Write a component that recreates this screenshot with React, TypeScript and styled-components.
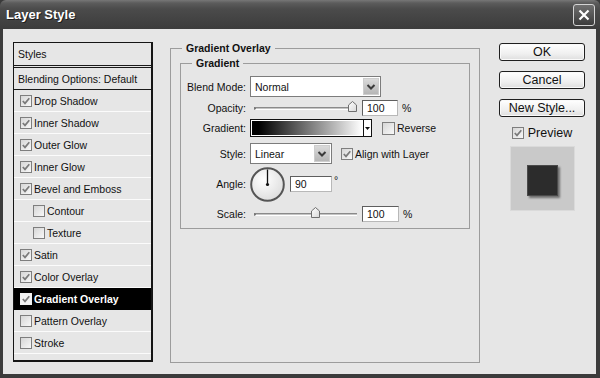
import React from 'react';
import styled, { createGlobalStyle, css } from 'styled-components';

const Global = createGlobalStyle`
  html, body { margin: 0; padding: 0; background: #3a3a3a; }
  body { width: 600px; height: 378px; overflow: hidden; font-family: "Liberation Sans", Arial, sans-serif; color: #111; }
  * { box-sizing: border-box; }
`;

const Window = styled.div`
  width: 600px;
  height: 378px;
  display: flex;
  flex-direction: column;
  background: #3b3b3b;
  border-radius: 6px 6px 0 0;
  overflow: hidden;
`;

const TitleBar = styled.div`
  height: 29px;
  flex: none;
  display: flex;
  align-items: center;
  justify-content: space-between;
  padding: 0 5px 0 6px;
  background: linear-gradient(#777 0px, #5c5c5c 3px, #4b4b4b 9px, #444 18px, #3c3c3c 29px);
`;

const Title = styled.div`
  color: #fff;
  font-weight: bold;
  font-size: 13px;
  text-shadow: 1px 1px 0 #1e1e1e;
`;

const CloseBtn = styled.div`
  width: 22px;
  height: 22px;
  border: 1px solid #d4d4d4;
  border-radius: 3px;
  background: linear-gradient(#707070, #3c3c3c);
  display: flex;
  align-items: center;
  justify-content: center;
`;

const Body = styled.div`
  flex: 1;
  margin: 0 4px 4px 3px;
  background: #e6e6e6;
  display: flex;
  align-items: flex-start;
  padding: 13px 0 0 10px;
`;

/* ---------- left list ---------- */
const List = styled.div`
  width: 140px;
  height: 320px;
  flex: none;
  border: 1px solid #151515;
  border-right-width: 2px;
  border-bottom-width: 2px;
  background: #e6e6e6;
  overflow: hidden;
  font-size: 10.5px;
`;

const HeaderRow = styled.div<{ $double?: boolean }>`
  height: ${p => (p.$double ? 25 : 22)}px;
  display: flex;
  align-items: center;
  padding-left: 4px;
  border-bottom: ${p => (p.$double ? '3px double #1a1a1a' : '1px solid #1a1a1a')};
`;

const Item = styled.div<{ $indent?: boolean; $selected?: boolean }>`
  height: 22px;
  display: flex;
  align-items: center;
  gap: 2px;
  padding-left: ${p => (p.$indent ? 19 : 6)}px;
  border-bottom: 1px solid #fbfbfb;
  ${p =>
    p.$selected &&
    css`
      background: #000;
      color: #fff;
      font-weight: bold;
      border-bottom-color: #000;
    `}
`;

const Box = styled.span<{ $size: number; $inverted?: boolean }>`
  width: ${p => p.$size}px;
  height: ${p => p.$size}px;
  flex: none;
  display: inline-flex;
  align-items: center;
  justify-content: center;
  border: 1px solid ${p => (p.$inverted ? '#f0f0f0' : '#7e7e7e')};
  background: ${p => (p.$inverted ? '#f2f2f2' : 'linear-gradient(135deg, #d6d6d6, #f8f8f8)')};
`;

const CheckBox: React.FC<{ checked?: boolean; inverted?: boolean; size?: number }> = ({
  checked,
  inverted,
  size = 12,
}) => (
  <Box $size={size} $inverted={inverted}>
    {checked && (
      <svg width={size - 2} height={size - 2} viewBox="0 0 10 10">
        <polyline points="1.8,5 4,7.4 8.3,2.3" fill="none" stroke="#7a7a7a" strokeWidth="1.7" />
      </svg>
    )}
  </Box>
);

/* ---------- middle groups ---------- */
const Group = styled.fieldset<{ $w: number; $h?: number; $pad: string; $mt?: number; $ml?: number }>`
  margin: ${p => p.$mt ?? 0}px 0 0 ${p => p.$ml ?? 0}px;
  min-inline-size: 0;
  width: ${p => p.$w}px;
  ${p => (p.$h ? `height: ${p.$h}px;` : '')}
  border: 1px solid #9c9c9c;
  padding: ${p => p.$pad};
  flex: none;
`;

const Legend = styled.legend<{ $indent: number }>`
  font-weight: bold;
  font-size: 10.5px;
  line-height: 12px;
  padding: 0 4px;
  margin-left: ${p => p.$indent}px;
`;

const Row = styled.div<{ $h: number; $mt: number }>`
  display: grid;
  grid-template-columns: 65px auto;
  column-gap: 4px;
  align-items: center;
  height: ${p => p.$h}px;
  margin-top: ${p => p.$mt}px;
  font-size: 10.5px;
`;

const Label = styled.span`
  text-align: right;
`;

const Controls = styled.div<{ $gap: number }>`
  display: flex;
  align-items: center;
  gap: ${p => p.$gap}px;
`;

const Select = styled.div<{ $w: number }>`
  width: ${p => p.$w}px;
  height: 21px;
  border: 1px solid #7c7c7c;
  background: #fff;
  display: flex;
  align-items: center;
  justify-content: space-between;
  padding: 1px 1px 1px 4px;
`;

const SelectArrow = styled.span`
  width: 16px;
  align-self: stretch;
  background: linear-gradient(#dadada, #b6b6b6);
  border: 1px solid #cdcdcd;
  display: flex;
  align-items: center;
  justify-content: center;
`;

const Chevron = () => (
  <svg width="10" height="8" viewBox="0 0 10 8">
    <polyline points="1.5,2 5,5.5 8.5,2" fill="none" stroke="#3a3a3a" strokeWidth="2" />
  </svg>
);

const NumInput = styled.div<{ $w: number }>`
  width: ${p => p.$w}px;
  height: 16px;
  border: 1px solid #5e5e5e;
  border-right-color: #b8b8b8;
  border-bottom-color: #b8b8b8;
  background: #fff;
  padding-left: 4px;
  display: flex;
  align-items: center;
`;

const Unit = styled.span<{ $top?: boolean }>`
  ${p => (p.$top ? 'align-self: flex-start; margin: 7px 0 0 -3px;' : '')}
`;

const SliderWrap = styled.div<{ $w: number }>`
  position: relative;
  width: ${p => p.$w}px;
  height: 12px;
  margin: -3px 1px 0 4px;
`;

const Track = styled.div`
  position: absolute;
  left: 0;
  right: 0;
  top: 6px;
  height: 3px;
  border-top: 1px solid #8a8a8a;
  border-bottom: 1px solid #fff;
  background: #c4c4c4;
  border-left: 2px solid #777;
`;

const Thumb = styled.svg`
  position: absolute;
  top: 0;
`;

const Slider: React.FC<{ pos: number; width?: number }> = ({ pos, width = 103 }) => (
  <SliderWrap $w={width}>
    <Track />
    <Thumb width="9" height="11" viewBox="0 0 9 11" style={{ left: Math.round((width - 9) * pos) }}>
      <defs>
        <linearGradient id="thumbg" x1="0" y1="0" x2="1" y2="1">
          <stop offset="0%" stopColor="#ffffff" />
          <stop offset="100%" stopColor="#d8d8d8" />
        </linearGradient>
      </defs>
      <path d="M0.5,10.5 L0.5,4 L4.5,0.5 L8.5,4 L8.5,10.5 Z" fill="url(#thumbg)" stroke="#6f6f6f" strokeWidth="1" />
    </Thumb>
  </SliderWrap>
);

const GradientBox = styled.div`
  width: 122px;
  height: 18px;
  border: 1px solid #111;
  display: flex;
  background: #fff;
`;

const GradientFill = styled.div`
  flex: 1;
  margin: 1px;
  background: linear-gradient(to right, #000 0%, #000 6%, #5a5a5a 40%, #b8b8b8 75%, #fff 100%);
`;

const GradientArrow = styled.div`
  width: 8px;
  border-left: 1px solid #111;
  display: flex;
  align-items: center;
  justify-content: center;
`;

const CheckLabel = styled.label`
  display: flex;
  align-items: center;
  gap: 2px;
`;

const DialSvg = styled.svg`
  display: block;
`;

const Dial: React.FC<{ angle: number }> = ({ angle }) => {
  const r = (angle * Math.PI) / 180;
  const x = 17.5 + Math.cos(r) * 15;
  const y = 17.5 - Math.sin(r) * 15;
  return (
    <DialSvg width="35" height="35" viewBox="0 0 35 35">
      <defs>
        <radialGradient id="dialg" cx="40%" cy="35%" r="70%">
          <stop offset="0%" stopColor="#ffffff" />
          <stop offset="100%" stopColor="#dcdcdc" />
        </radialGradient>
      </defs>
      <circle cx="17.5" cy="17.5" r="16.3" fill="url(#dialg)" stroke="#555" strokeWidth="2" />
      <line x1="17.5" y1="17.5" x2={x} y2={y} stroke="#111" strokeWidth="1.3" />
      <circle cx="17.5" cy="17.5" r="1.6" fill="#111" />
    </DialSvg>
  );
};

/* ---------- right column ---------- */
const Side = styled.div`
  width: 86px;
  flex: none;
  margin-left: 19px;
  padding-top: 1px;
  display: flex;
  flex-direction: column;
  align-items: center;
`;

const Button = styled.div<{ $mt: number }>`
  width: 86px;
  height: 18px;
  margin-top: ${p => p.$mt}px;
  border: 1px solid #1f1f1f;
  border-radius: 3px;
  background: linear-gradient(#ffffff, #f0f0f0 60%, #dedede);
  box-shadow: inset 0 0 0 1px #fafafa;
  font-size: 12.5px;
  display: flex;
  align-items: center;
  justify-content: center;
  color: #111;
`;

const PreviewCheck = styled(CheckLabel)`
  margin-top: 10px;
  height: 12px;
  font-size: 12.5px;
  gap: 4px;
`;

const Swatch = styled.div`
  width: 65px;
  height: 65px;
  margin-top: 7px;
  background: #c9c9c9;
  border: 1px solid #dadada;
  display: flex;
  align-items: center;
  justify-content: center;
  padding-top: 3px;
`;

const SwatchSquare = styled.div`
  width: 31px;
  height: 31px;
  background: #2c2c2c;
  border: 1px solid #4a4a4a;
  box-shadow: 2px 2px 2px rgba(0, 0, 0, 0.45);
`;

const items: { label: string; checked: boolean; indent?: boolean; selected?: boolean }[] = [
  { label: 'Drop Shadow', checked: true },
  { label: 'Inner Shadow', checked: true },
  { label: 'Outer Glow', checked: true },
  { label: 'Inner Glow', checked: true },
  { label: 'Bevel and Emboss', checked: true },
  { label: 'Contour', checked: false, indent: true },
  { label: 'Texture', checked: false, indent: true },
  { label: 'Satin', checked: true },
  { label: 'Color Overlay', checked: true },
  { label: 'Gradient Overlay', checked: true, selected: true },
  { label: 'Pattern Overlay', checked: false },
  { label: 'Stroke', checked: false },
];

export default function App() {
  return (
    <>
      <Global />
      <Window>
        <TitleBar>
          <Title>Layer Style</Title>
          <CloseBtn>
            <svg width="12" height="12" viewBox="0 0 12 12">
              <path d="M1.5,1.5 L10.5,10.5 M10.5,1.5 L1.5,10.5" stroke="#fff" strokeWidth="2.2" />
            </svg>
          </CloseBtn>
        </TitleBar>
        <Body>
          <List>
            <HeaderRow $double>Styles</HeaderRow>
            <HeaderRow>Blending Options: Default</HeaderRow>
            {items.map(it => (
              <Item key={it.label} $indent={it.indent} $selected={it.selected}>
                <CheckBox checked={it.checked} inverted={it.selected} />
                {it.label}
              </Item>
            ))}
          </List>

          <Group $w={310} $h={321} $pad="0 9px 0 9px" $ml={17}>
            <Legend $indent={2}>Gradient Overlay</Legend>
            <Group $w={290} $pad="0 0 6px 0" $mt={3}>
              <Legend $indent={11}>Gradient</Legend>
              <Row $h={21} $mt={7}>
                <Label>Blend Mode:</Label>
                <Controls $gap={0}>
                  <Select $w={131}>
                    Normal
                    <SelectArrow>
                      <Chevron />
                    </SelectArrow>
                  </Select>
                </Controls>
              </Row>
              <Row $h={16} $mt={3}>
                <Label>Opacity:</Label>
                <Controls $gap={4}>
                  <Slider pos={1} />
                  <NumInput $w={36}>100</NumInput>
                  <Unit>%</Unit>
                </Controls>
              </Row>
              <Row $h={18} $mt={3}>
                <Label>Gradient:</Label>
                <Controls $gap={10}>
                  <GradientBox>
                    <GradientFill />
                    <GradientArrow>
                      <svg width="5" height="3" viewBox="0 0 5 3">
                        <path d="M0,0 L5,0 L2.5,3 Z" fill="#111" />
                      </svg>
                    </GradientArrow>
                  </GradientBox>
                  <CheckLabel>
                    <CheckBox size={13} />
                    Reverse
                  </CheckLabel>
                </Controls>
              </Row>
              <Row $h={21} $mt={6}>
                <Label>Style:</Label>
                <Controls $gap={9}>
                  <Select $w={82}>
                    Linear
                    <SelectArrow>
                      <Chevron />
                    </SelectArrow>
                  </Select>
                  <CheckLabel>
                    <CheckBox checked size={12} />
                    Align with Layer
                  </CheckLabel>
                </Controls>
              </Row>
              <Row $h={36} $mt={2}>
                <Label>Angle:</Label>
                <Controls $gap={5}>
                  <Dial angle={90} />
                  <NumInput $w={42}>90</NumInput>
                  <Unit $top>°</Unit>
                </Controls>
              </Row>
              <Row $h={16} $mt={4}>
                <Label>Scale:</Label>
                <Controls $gap={4}>
                  <Slider pos={0.61} />
                  <NumInput $w={37}>100</NumInput>
                  <Unit>%</Unit>
                </Controls>
              </Row>
            </Group>
          </Group>

          <Side>
            <Button $mt={0}>OK</Button>
            <Button $mt={10}>Cancel</Button>
            <Button $mt={10}>New Style...</Button>
            <PreviewCheck>
              <CheckBox checked size={12} />
              Preview
            </PreviewCheck>
            <Swatch>
              <SwatchSquare />
            </Swatch>
          </Side>
        </Body>
      </Window>
    </>
  );
}
